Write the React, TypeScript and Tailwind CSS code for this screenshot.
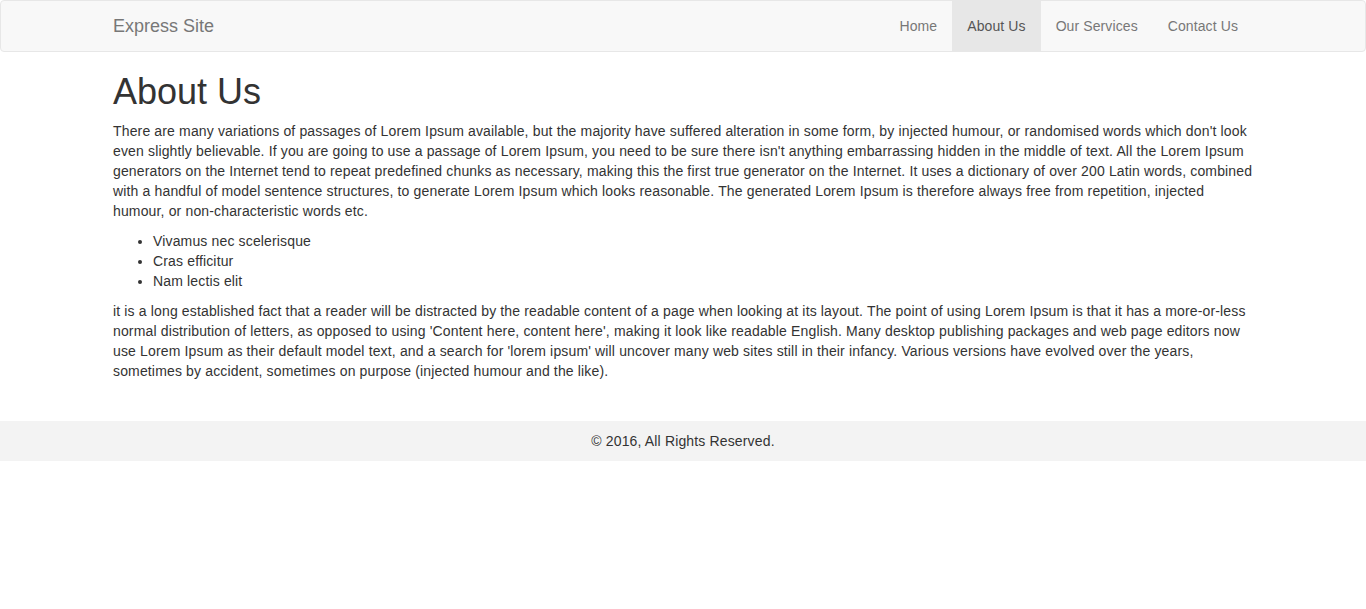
const navLinks = [
  { label: "Home", active: false },
  { label: "About Us", active: true },
  { label: "Our Services", active: false },
  { label: "Contact Us", active: false },
];

const listItems = ["Vivamus nec scelerisque", "Cras efficitur", "Nam lectis elit"];

export default function App() {
  return (
    <div className="min-h-[609px] bg-white text-[14px] leading-[20px] text-[#333] font-['Liberation_Sans',Arial,sans-serif]">
      {/* Navbar */}
      <nav className="h-[52px] rounded-[4px] border border-[#e7e7e7] bg-[#f8f8f8]">
        <div className="mx-auto flex w-[1170px] items-center justify-between px-[15px]">
          <a className="py-[15px] text-[18px] leading-[20px] text-[#777]" href="#">
            Express Site
          </a>
          <ul className="flex">
            {navLinks.map((link) => (
              <li key={link.label}>
                <a
                  href="#"
                  className={`block px-[15px] py-[15px] leading-[20px] tracking-[0.1px] ${
                    link.active ? "bg-[#e7e7e7] text-[#555]" : "text-[#777]"
                  }`}
                >
                  {link.label}
                </a>
              </li>
            ))}
          </ul>
        </div>
      </nav>

      {/* Content */}
      <div className="mx-auto w-[1170px] px-[15px] tracking-[0.15px]">
        <h1 className="mt-[20px] mb-[10px] text-[36px] leading-[39px] font-normal tracking-normal">About Us</h1>
        <p className="mb-[10px]">
          There are many variations of passages of Lorem Ipsum available, but the majority have suffered alteration in
          some form, by injected humour, or randomised words which don't look even slightly believable. If you are going
          to use a passage of Lorem Ipsum, you need to be sure there isn't anything embarrassing hidden in the middle of
          text. All the Lorem Ipsum generators on the Internet tend to repeat predefined chunks as necessary, making this
          the first true generator on the Internet. It uses a dictionary of over 200 Latin words, combined with a handful
          of model sentence structures, to generate Lorem Ipsum which looks reasonable. The generated Lorem Ipsum is
          therefore always free from repetition, injected humour, or non-characteristic words etc.
        </p>
        <ul className="mb-[10px] list-disc pl-[40px]">
          {listItems.map((item) => (
            <li key={item}>{item}</li>
          ))}
        </ul>
        <p>
          it is a long established fact that a reader will be distracted by the readable content of a page when looking
          at its layout. The point of using Lorem Ipsum is that it has a more-or-less normal distribution of letters, as
          opposed to using 'Content here, content here', making it look like readable English. Many desktop publishing
          packages and web page editors now use Lorem Ipsum as their default model text, and a search for 'lorem ipsum'
          will uncover many web sites still in their infancy. Various versions have evolved over the years, sometimes by
          accident, sometimes on purpose (injected humour and the like).
        </p>
      </div>

      {/* Footer */}
      <footer className="mt-[40px] bg-[#f3f3f3] py-[10px] text-center tracking-[0.15px]">
        © 2016, All Rights Reserved.
      </footer>
    </div>
  );
}
